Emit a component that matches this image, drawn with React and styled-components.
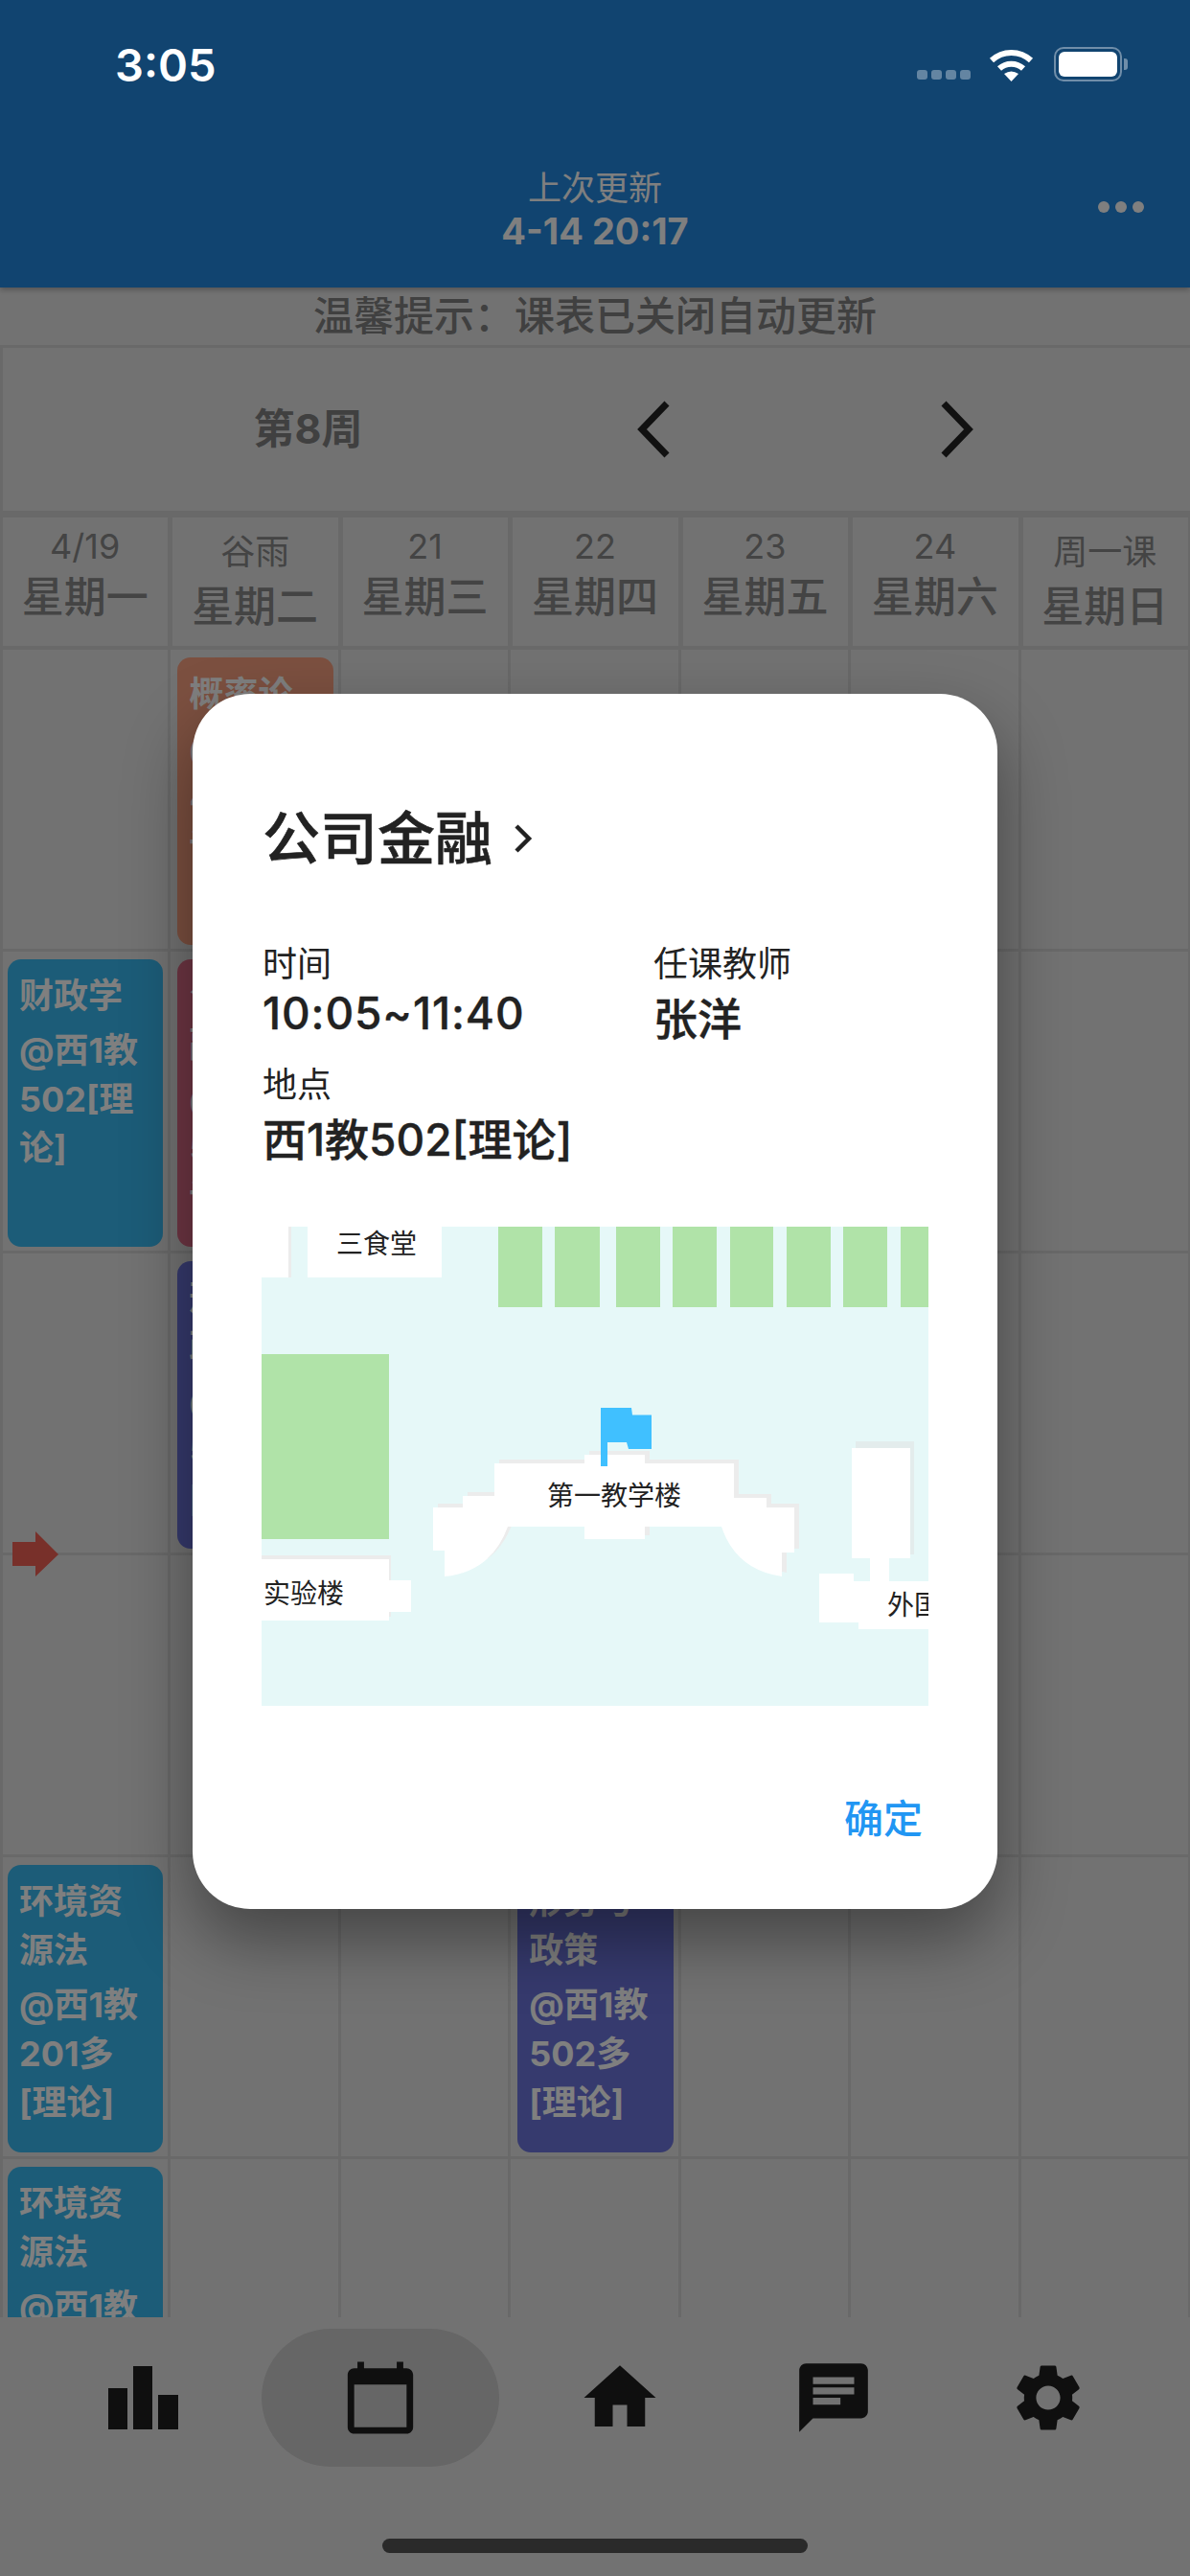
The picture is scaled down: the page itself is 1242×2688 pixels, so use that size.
import styled, { createGlobalStyle } from "styled-components";
import { MdCalendarToday, MdHome, MdChat, MdSettings } from "react-icons/md";

const days = [
  { top: "4/19", day: "星期一" },
  { top: "谷雨", day: "星期二", tall: true },
  { top: "21", day: "星期三" },
  { top: "22", day: "星期四" },
  { top: "23", day: "星期五" },
  { top: "24", day: "星期六" },
  { top: "周一课", day: "星期日", tall: true },
];

const env = { name: "环境资源法", room: "@西1教201多[理论]", tone: "#38b9f0" };

// one row per lesson block, seven cells per row
const lessons = [
  [null, { name: "概率论", room: "@西1教402[理论]", tone: "#f8a080" }, null, null, null, null, null],
  [
    { name: "财政学", room: "@西1教502[理论]", tone: "#38b9f0" },
    { name: "公司金融", room: "@西1教502[理论]", tone: "#de6c88" },
    null, null, null, null, null,
  ],
  [null, { name: "形势与政策", room: "@西1教502多[理论]", tone: "#6c74dc" }, null, null, null, null, null],
  [null, null, null, null, null, null, null],
  [env, null, null, { name: "形势与政策", room: "@西1教502多[理论]", tone: "#6c74dc" }, null, null, null],
  [env, null, null, null, null, null, null],
];

function CampusMap() {
  const strips = [
    [247, 46], [306, 47], [370, 46], [429, 46], [489, 45], [548, 46], [607, 46], [667, 40],
  ];
  const teaching =
    "M179 293H210V281H243V247H337V238H400V247H493V283H527V293H556V340H543V365Q495 358 480 313H400V326H337V313H257Q240 360 191 365V338H179Z";
  return (
    <MapSvg viewBox="0 0 696 500">
      <rect width="696" height="500" fill="#e6f8f8" />
      {strips.map(([x, w]) => (
        <rect key={x} x={x} y="0" width={w} height="84" fill="#b0e3a8" />
      ))}
      <rect x="0" y="133" width="133" height="193" fill="#b0e3a8" />

      <rect x="0" y="0" width="31" height="53" fill="#ececec" />
      <rect x="0" y="0" width="28" height="53" fill="#fff" />
      <rect x="48" y="0" width="140" height="53" fill="#fff" />
      <text x="120" y="28">三食堂</text>

      <path d={teaching} fill="#ececec" transform="translate(5 -4)" />
      <path d={teaching} fill="#fff" />
      <text x="368" y="291">第一教学楼</text>

      <rect x="0" y="343" width="135" height="64" fill="#ececec" />
      <path d="M0 347H133V369H156V402H133V411H0Z" fill="#fff" />
      <text x="44" y="393">实验楼</text>

      <rect x="620" y="224" width="61" height="118" fill="#e3ecec" />
      <rect x="616" y="231" width="61" height="115" fill="#fff" />
      <rect x="635" y="346" width="20" height="24" fill="#fff" />
      <path d="M582 362H618V370H696V420H623V413H582Z" fill="#fff" />
      <text x="653" y="405" textAnchor="start">外国语楼</text>

      <path
        d="M354 189H386L387 196.500H407V232H383L381 225H361V250H354Z"
        fill="#40c0ff"
      />
    </MapSvg>
  );
}

function WifiIcon() {
  return (
    <svg width="47" height="36" viewBox="0 0 47 36" fill="none">
      <path d="M3 14A30 30 0 0 1 44 14" stroke="#fff" strokeWidth="6" />
      <path d="M11 22.500A18.500 18.500 0 0 1 36 22.500" stroke="#fff" strokeWidth="6" />
      <path d="M16 28Q23.500 23 31 28L23.500 36Z" fill="#fff" />
    </svg>
  );
}

function BarsIcon() {
  return (
    <svg width="73" height="66" viewBox="0 0 73 66" fill="#1e1e1e">
      <rect x="0" y="23" width="20" height="43" />
      <rect x="26" y="0" width="20" height="66" />
      <rect x="52" y="30" width="21" height="36" />
    </svg>
  );
}

export default function App() {
  return (
    <>
      <GlobalStyle />
      <Screen>
        <Header>
          <span />
          <UpdateInfo>
            <UpdateLabel>上次更新</UpdateLabel>
            <UpdateTime>4-14 20:17</UpdateTime>
          </UpdateInfo>
          <MoreDots>
            <i />
            <i />
            <i />
          </MoreDots>
        </Header>
        <Tip>温馨提示：课表已关闭自动更新</Tip>
        <WeekRow>
          <WeekLabel>第8周</WeekLabel>
          <WeekArrows>
            <svg width="36" height="60" viewBox="0 0 36 60" fill="none">
              <path d="M32 3L6 30L32 57" stroke="#222" strokeWidth="7" />
            </svg>
            <svg width="36" height="60" viewBox="0 0 36 60" fill="none">
              <path d="M4 3L30 30L4 57" stroke="#222" strokeWidth="7" />
            </svg>
          </WeekArrows>
        </WeekRow>
        <DayRow>
          {days.map((d) => (
            <DayCell key={d.day}>
              <DayTop $tall={d.tall}>{d.top}</DayTop>
              <DayName>{d.day}</DayName>
            </DayCell>
          ))}
        </DayRow>
        <Timetable>
          <NowArrow width="48" height="47" viewBox="0 0 48 47">
            <path d="M0 11H24V0L48 24L24 47V36H0Z" fill="#f06054" />
          </NowArrow>
          {lessons.flat().map((lesson, i) => (
            <LessonCell key={i}>
              {lesson && (
                <Lesson $tone={lesson.tone}>
                  <div>{lesson.name}</div>
                  <LessonRoom>{lesson.room}</LessonRoom>
                </Lesson>
              )}
            </LessonCell>
          ))}
        </Timetable>
        <TabBar>
          <Tabs>
            <Tab>
              <BarsIcon />
            </Tab>
            <Tab $active>
              <MdCalendarToday size={82} />
            </Tab>
            <Tab>
              <MdHome size={90} />
            </Tab>
            <Tab>
              <MdChat size={86} />
            </Tab>
            <Tab>
              <MdSettings size={84} />
            </Tab>
          </Tabs>
          <HomeBar />
        </TabBar>

        <Overlay>
          <Dialog>
            <DialogTitle>
              公司金融
              <svg width="20" height="30" viewBox="0 0 20 30" fill="none">
                <path d="M3 2L16 15L3 28" stroke="#222" strokeWidth="4.500" />
              </svg>
            </DialogTitle>
            <InfoGrid>
              <div>
                <InfoLabel>时间</InfoLabel>
                <InfoValue $spaced>10:05~11:40</InfoValue>
              </div>
              <div>
                <InfoLabel>任课教师</InfoLabel>
                <InfoValue $low>张洋</InfoValue>
              </div>
              <InfoWide>
                <InfoLabel>地点</InfoLabel>
                <InfoValue $low>西1教502[理论]</InfoValue>
              </InfoWide>
            </InfoGrid>
            <CampusMap />
            <DialogActions>
              <ConfirmButton>确定</ConfirmButton>
            </DialogActions>
          </Dialog>
        </Overlay>

        <StatusBar>
          <Clock>3:05</Clock>
          <StatusIcons>
            <Signal>
              <i />
              <i />
              <i />
              <i />
            </Signal>
            <WifiIcon />
            <Battery>
              <BatteryFill />
            </Battery>
          </StatusIcons>
        </StatusBar>
      </Screen>
    </>
  );
}

const GlobalStyle = createGlobalStyle`
  html, body {
    margin: 0;
    padding: 0;
  }
  body {
    font-family: Inter, "Noto Sans CJK SC", sans-serif;
  }
  * {
    box-sizing: border-box;
  }
`;

const Screen = styled.div`
  position: relative;
  width: 1242px;
  height: 2688px;
  overflow: hidden;
  background: #e5e5e5;
  display: flex;
  flex-direction: column;
`;

const Header = styled.div`
  height: 300px;
  flex: none;
  padding-top: 172px;
  background: #2288e0;
  box-shadow: 0 2px 6px rgba(0, 0, 0, 0.3);
  display: grid;
  grid-template-columns: 1fr auto 1fr;
  align-items: start;
  position: relative;
`;

const UpdateInfo = styled.div`
  color: #fff;
  text-align: center;
`;

const UpdateLabel = styled.div`
  font-size: 35px;
  line-height: 48px;
`;

const UpdateTime = styled.div`
  font-size: 38px;
  line-height: 42px;
  font-weight: 700;
`;

const MoreDots = styled.div`
  justify-self: end;
  display: flex;
  gap: 6px;
  padding: 38px 48px 0 0;

  i {
    width: 12px;
    height: 12px;
    border-radius: 50%;
    background: #fff;
  }
`;

const Tip = styled.div`
  height: 63px;
  flex: none;
  border-bottom: 3px solid #d2d2d2;
  text-align: center;
  font-size: 42px;
  line-height: 60px;
  font-weight: 500;
  color: #808080;
`;

const WeekRow = styled.div`
  height: 177px;
  flex: none;
  padding-bottom: 3px;
  border-bottom: 7px solid #d2d2d2;
  border-left: 3px solid #d2d2d2;
  display: flex;
  align-items: center;
`;

const WeekLabel = styled.div`
  width: 637px;
  text-align: center;
  font-size: 43px;
  line-height: 60px;
  font-weight: 700;
  color: #808080;
`;

const WeekArrows = styled.div`
  display: flex;
  gap: 281px;
  padding: 3px 0 0 24px;
`;

const DayRow = styled.div`
  height: 138px;
  flex: none;
  display: grid;
  grid-template-columns: repeat(7, 1fr);
`;

const DayCell = styled.div`
  padding-top: 8px;
  text-align: center;
  color: #888;
  box-shadow: inset -2px 0 0 #d2d2d2, inset 3px 0 0 #d2d2d2, inset 0 -4px 0 #d2d2d2;
`;

const DayTop = styled.div`
  font-size: 36px;
  line-height: ${(p) => (p.$tall ? "52px" : "44px")};
  margin-top: ${(p) => (p.$tall ? "2px" : "0")};
`;

const DayName = styled.div`
  font-size: 44px;
  line-height: 62px;
  font-weight: 500;
`;

const Timetable = styled.div`
  position: relative;
  height: 1740px;
  flex: none;
  overflow: hidden;
  display: grid;
  grid-template-columns: repeat(7, 1fr);
  grid-auto-rows: 315px;
`;

const NowArrow = styled.svg`
  position: absolute;
  left: 13px;
  top: 920px;
  z-index: 2;
`;

const LessonCell = styled.div`
  padding: 8px 7px 0 8px;
  box-shadow: inset -2px 0 0 #d2d2d2, inset 1px 0 0 #d2d2d2, inset 0 -3px 0 #d2d2d2;

  &:nth-of-type(7n + 1) {
    box-shadow: inset -2px 0 0 #d2d2d2, inset 3px 0 0 #d2d2d2, inset 0 -3px 0 #d2d2d2;
  }
`;

const Lesson = styled.div`
  height: 300px;
  padding: 13px 12px 0;
  border-radius: 14px;
  background: ${(p) => p.$tone};
  color: #fff;
  font-size: 36px;
  line-height: 51px;
  font-weight: 700;
`;

const LessonRoom = styled.div`
  margin-top: 6px;
`;

const TabBar = styled.div`
  flex: 1;
  display: flex;
  flex-direction: column;
  align-items: center;
`;

const Tabs = styled.div`
  width: 100%;
  height: 144px;
  margin-top: 12px;
  padding-left: 25px;
  display: grid;
  grid-template-columns: 248px 248px 252px 194px 254px;
  align-items: center;
`;

const Tab = styled.div`
  height: 144px;
  display: flex;
  align-items: center;
  justify-content: center;
  color: #1e1e1e;
  background: ${(p) => (p.$active ? "#cccccc" : "transparent")};
  border-radius: 72px;
`;

const HomeBar = styled.div`
  width: 444px;
  height: 15px;
  margin-top: 75px;
  border-radius: 8px;
  background: #555;
`;

const Overlay = styled.div`
  position: absolute;
  inset: 0;
  z-index: 10;
  padding-top: 724px;
  background: rgba(0, 0, 0, 0.5);
  display: flex;
  justify-content: center;
  align-items: flex-start;
`;

const Dialog = styled.div`
  width: 840px;
  height: 1268px;
  padding: 110px 72px 0 72px;
  border-radius: 60px;
  background: #fff;
  box-shadow: 0 32px 70px rgba(0, 0, 0, 0.4);
  color: #222;
`;

const DialogTitle = styled.div`
  display: flex;
  align-items: center;
  gap: 22px;
  font-size: 60px;
  line-height: 82px;
  font-weight: 500;
  -webkit-text-stroke: 0.6px #222;
  padding-left: 1px;
`;

const InfoGrid = styled.div`
  margin-top: 68px;
  padding-left: 1px;
  display: grid;
  grid-template-columns: 408px 1fr;
  row-gap: 18px;
`;

const InfoWide = styled.div`
  grid-column: 1 / -1;
`;

const InfoLabel = styled.div`
  font-size: 36px;
  line-height: 44px;
`;

const InfoValue = styled.div`
  font-size: 46px;
  line-height: 58px;
  font-weight: 500;
  -webkit-text-stroke: 0.4px #222;
  letter-spacing: ${(p) => (p.$spaced ? "0.9px" : "0")};
  padding-top: ${(p) => (p.$low ? "6px" : "0")};
`;

const MapSvg = styled.svg`
  display: block;
  width: 696px;
  height: 500px;
  margin-top: 62px;

  text {
    font-size: 28px;
    fill: #222;
    text-anchor: middle;
  }
  text[text-anchor="start"] {
    text-anchor: start;
  }
`;

const DialogActions = styled.div`
  display: flex;
  justify-content: flex-end;
  margin-top: 88px;
  padding-right: 6px;
`;

const ConfirmButton = styled.div`
  font-size: 41px;
  line-height: 60px;
  font-weight: 500;
  color: #2196f3;
`;

const StatusBar = styled.div`
  position: absolute;
  top: 0;
  left: 0;
  right: 0;
  z-index: 20;
  height: 100px;
  padding: 40px 71px 0 120px;
  display: flex;
  justify-content: space-between;
  color: #fff;
`;

const Clock = styled.div`
  font-size: 47px;
  line-height: 56px;
  font-weight: 600;
`;

const StatusIcons = styled.div`
  display: flex;
  align-items: center;
  height: 54px;
`;

const Signal = styled.div`
  display: flex;
  gap: 4px;
  margin: 22px 19px 0 0;

  i {
    width: 11px;
    height: 10px;
    border-radius: 3px;
    background: rgba(255, 255, 255, 0.35);
  }
`;

const Battery = styled.div`
  position: relative;
  width: 71px;
  height: 36px;
  margin-left: 21px;
  padding: 3px;
  border: 2px solid rgba(255, 255, 255, 0.4);
  border-radius: 10px;

  &::after {
    content: "";
    position: absolute;
    right: -8px;
    top: 10px;
    width: 4px;
    height: 12px;
    border-radius: 0 3px 3px 0;
    background: rgba(255, 255, 255, 0.4);
  }
`;

const BatteryFill = styled.div`
  height: 100%;
  border-radius: 6px;
  background: #fff;
`;
